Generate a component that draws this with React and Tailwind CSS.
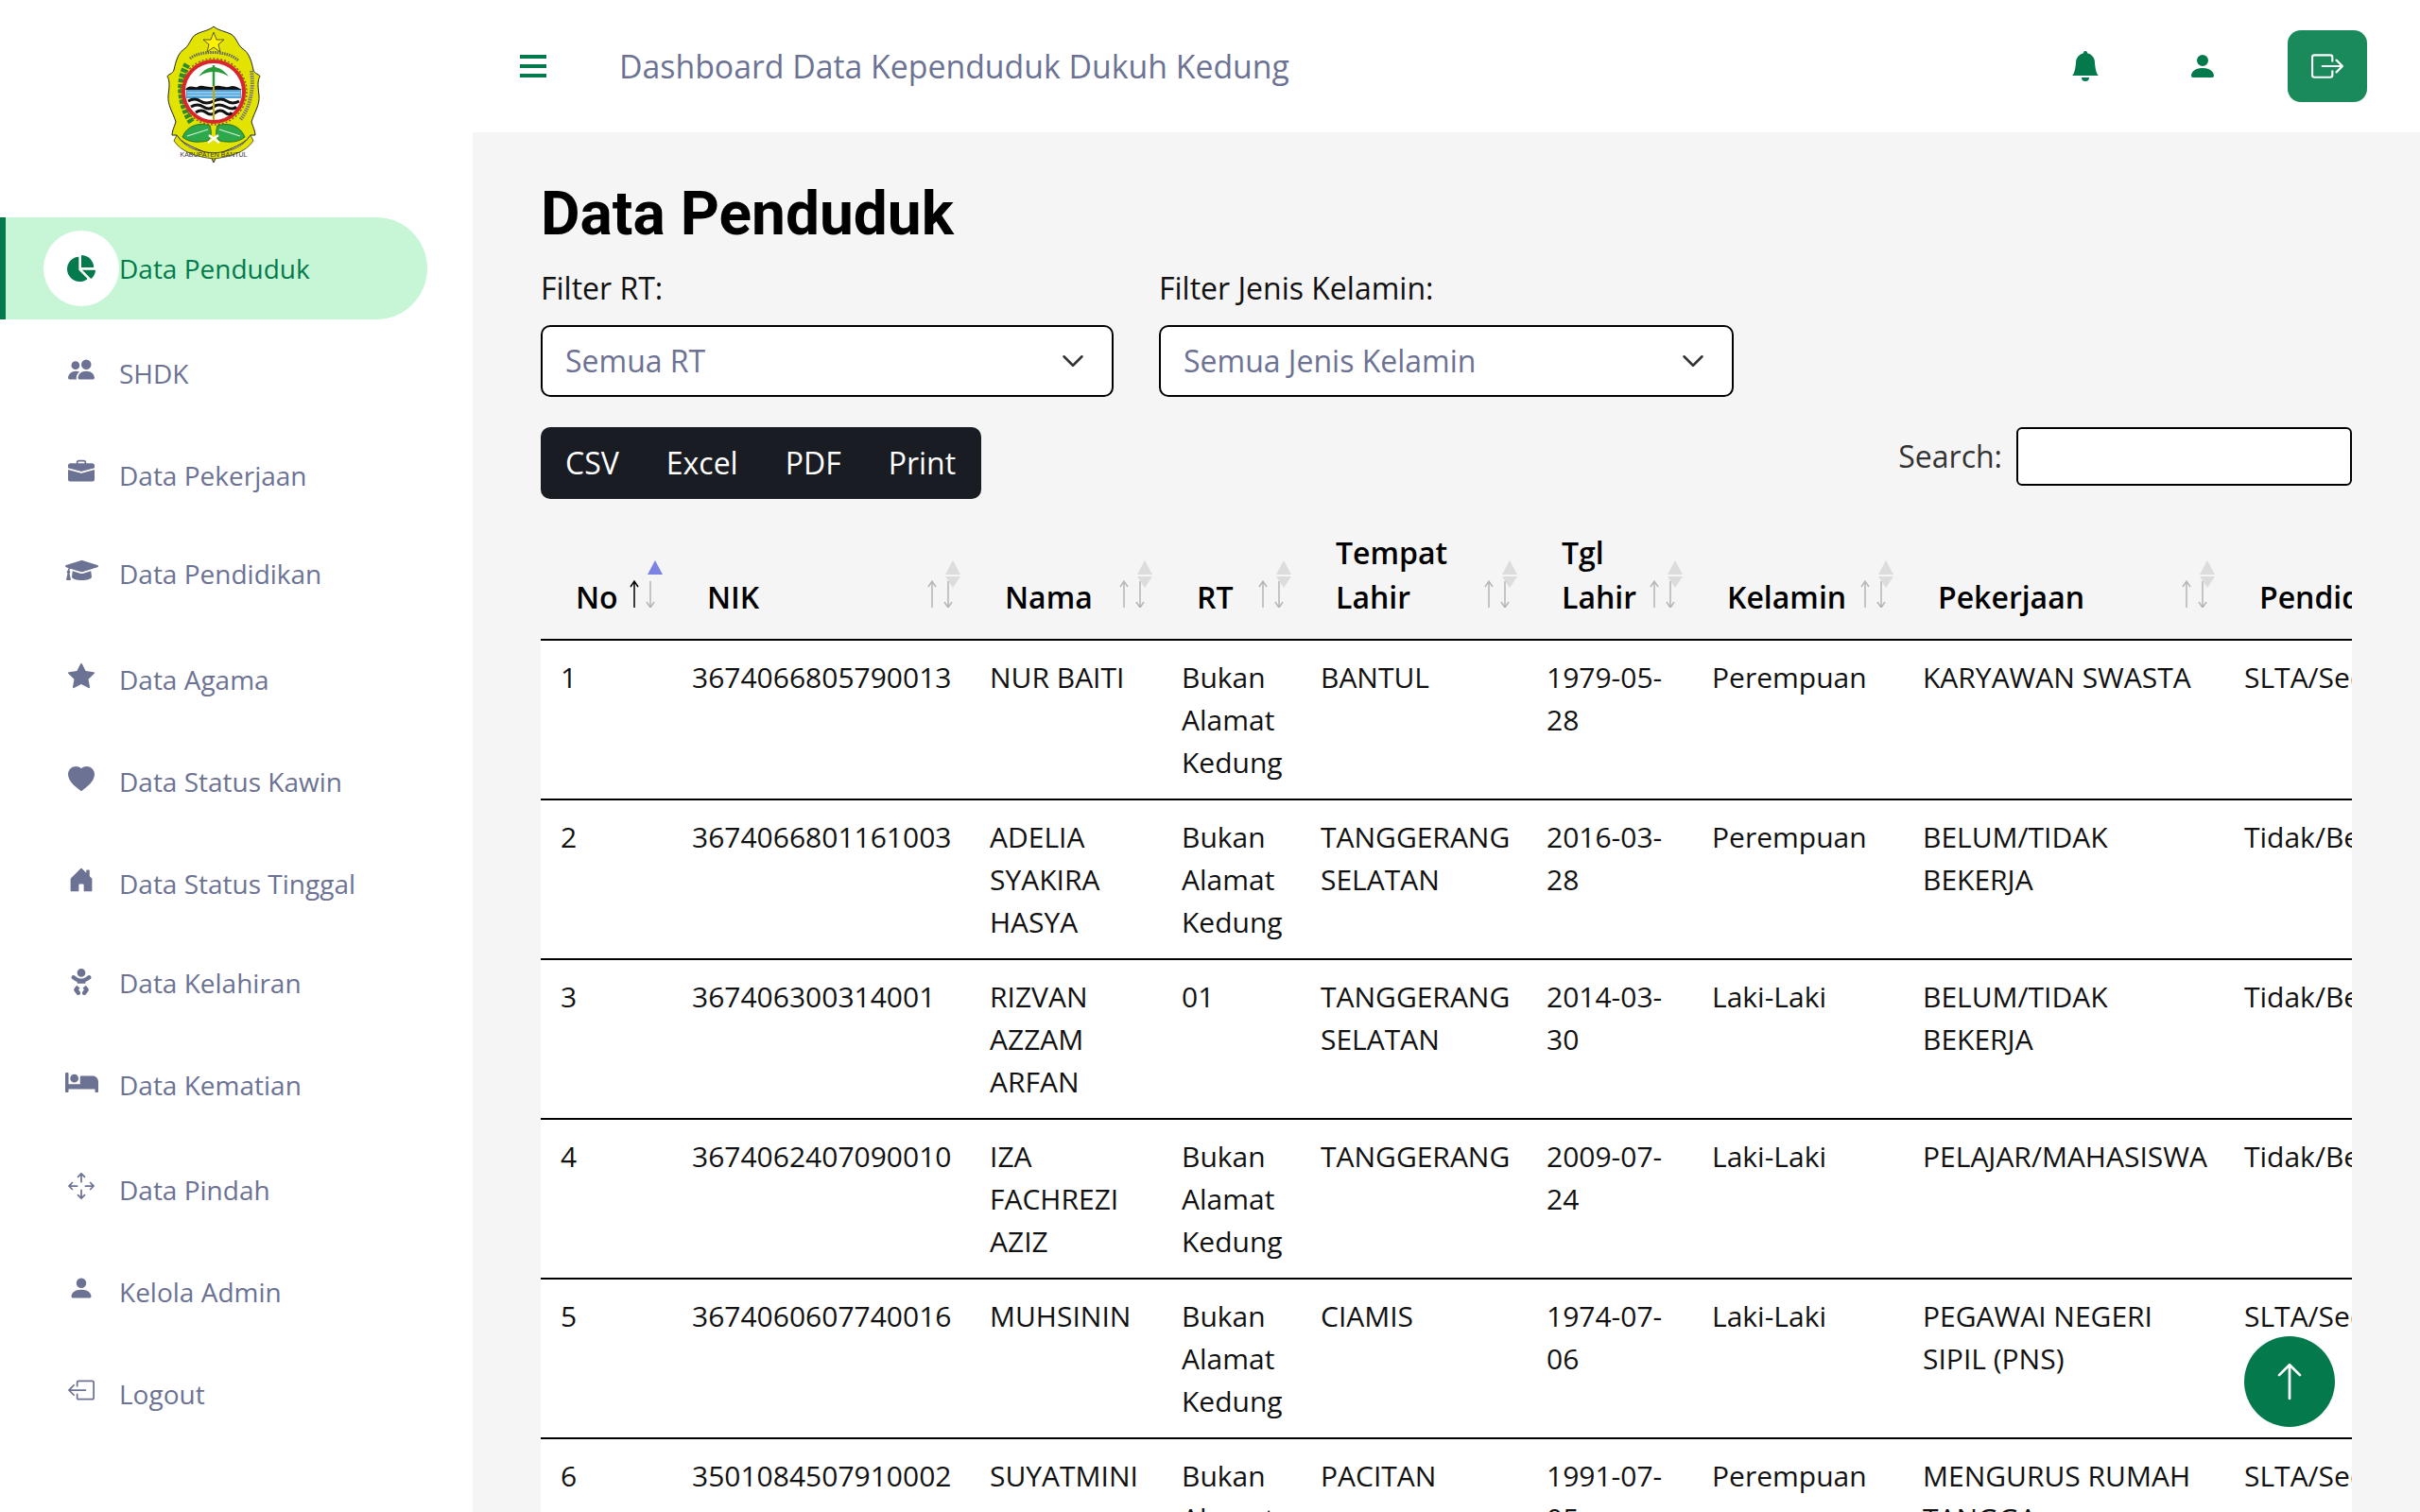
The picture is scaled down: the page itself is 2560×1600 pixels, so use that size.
import {
  BsPeopleFill,
  BsBriefcaseFill,
  BsStarFill,
  BsHeartFill,
  BsHouseDoorFill,
  BsArrowsMove,
  BsPersonFill,
  BsBoxArrowLeft,
  BsBoxArrowRight,
  BsBellFill,
  BsArrowUp,
} from "react-icons/bs";
import { FaChartPie, FaGraduationCap, FaBaby, FaBed } from "react-icons/fa";
import { ChevronDown } from "lucide-react";

const menu = [
  { label: "SHDK", icon: BsPeopleFill, cls: "mt-[27px]", iconCls: "mb-[8px] text-[28px]" },
  { label: "Data Pekerjaan", icon: BsBriefcaseFill, cls: "mt-[48px]", iconCls: "mb-[8px] text-[28px]" },
  { label: "Data Pendidikan", icon: FaGraduationCap, cls: "mt-[44px]", iconCls: "mb-[7px] text-[35px]" },
  { label: "Data Agama", icon: BsStarFill, cls: "mt-[52px]", iconCls: "mb-[8px] text-[28px]" },
  { label: "Data Status Kawin", icon: BsHeartFill, cls: "mt-[48px]", iconCls: "mb-[5px] text-[28px]" },
  { label: "Data Status Tinggal", icon: BsHouseDoorFill, cls: "mt-[48px]", iconCls: "mb-[8px] text-[28px]" },
  { label: "Data Kelahiran", icon: FaBaby, cls: "mt-[45px]", iconCls: "mb-[2px] text-[28px]" },
  { label: "Data Kematian", icon: FaBed, cls: "mt-[48px]", iconCls: "mb-[6px] text-[35px]" },
  { label: "Data Pindah", icon: BsArrowsMove, cls: "mt-[51px]", iconCls: "mb-[8px] text-[28px]" },
  { label: "Kelola Admin", icon: BsPersonFill, cls: "mt-[48px]", iconCls: "mb-[8px] text-[28px]" },
  { label: "Logout", icon: BsBoxArrowLeft, cls: "mt-[48px]", iconCls: "mb-[8px] text-[28px]" },
];

const columns = [
  { label: "No", width: "w-[139px]", active: true },
  { label: "NIK", width: "w-[315px]" },
  { label: "Nama", width: "w-[203px]" },
  { label: "RT", width: "w-[147px]" },
  { label: "Tempat Lahir", width: "w-[239px]" },
  { label: "Tgl Lahir", width: "w-[175px]" },
  { label: "Kelamin", width: "w-[223px]" },
  { label: "Pekerjaan", width: "w-[340px]" },
  { label: "Pendidikan", width: "w-[340px]" },
];

const rows = [
  ["1", "3674066805790013", "NUR BAITI", "Bukan Alamat Kedung", "BANTUL", "1979-05-28", "Perempuan", "KARYAWAN SWASTA", "SLTA/Sederajat"],
  ["2", "3674066801161003", "ADELIA SYAKIRA HASYA", "Bukan Alamat Kedung", "TANGGERANG SELATAN", "2016-03-28", "Perempuan", "BELUM/TIDAK BEKERJA", "Tidak/Belum Sekolah"],
  ["3", "367406300314001", "RIZVAN AZZAM ARFAN", "01", "TANGGERANG SELATAN", "2014-03-30", "Laki-Laki", "BELUM/TIDAK BEKERJA", "Tidak/Belum Sekolah"],
  ["4", "3674062407090010", "IZA FACHREZI AZIZ", "Bukan Alamat Kedung", "TANGGERANG", "2009-07-24", "Laki-Laki", "PELAJAR/MAHASISWA", "Tidak/Belum Sekolah"],
  ["5", "3674060607740016", "MUHSININ", "Bukan Alamat Kedung", "CIAMIS", "1974-07-06", "Laki-Laki", "PEGAWAI NEGERI SIPIL (PNS)", "SLTA/Sederajat"],
  ["6", "3501084507910002", "SUYATMINI", "Bukan Alamat Kedung", "PACITAN", "1991-07-05", "Perempuan", "MENGURUS RUMAH TANGGA", "SLTA/Sederajat"],
];

function Logo() {
  return (
    <svg width="100" height="146" viewBox="0 0 100 146">
      <path
        d="M50 1 C54 5 62 6 68 9 C74 12 75 20 80 24 C88 29 90 38 92 47 C93 51 99 52 99 54 C96 58 97 66 98 74 C99 84 93 92 90 102 C92 108 94 112 94 116 L89 116 C84 124 74 128 62 133 C56 135 54 136 50 145 C46 136 44 135 38 133 C26 128 16 124 11 116 L6 116 C6 112 8 108 10 102 C7 92 1 84 2 74 C3 66 4 58 1 54 C1 52 7 51 8 47 C10 38 12 29 20 24 C25 20 26 12 32 9 C38 6 46 5 50 1 Z"
        fill="#e2e400"
        stroke="#222"
        strokeWidth="1"
      />
      <path d="M50 7 L53 15 L61 15 L55 20 L57 28 L50 23 L43 28 L45 20 L39 15 L47 15 Z" fill="#fff200" stroke="#333" strokeWidth="0.8" />
      <path d="M25 35 C35 26 65 26 76 37" fill="none" stroke="#666" strokeWidth="3" strokeDasharray="1.5 1" />
      <path d="M90 48 C93 68 88 88 78 100" fill="none" stroke="#777" strokeWidth="4" strokeDasharray="1.5 1" />
      <path d="M22 41 C12 58 14 84 27 103" fill="none" stroke="#2f8a2f" strokeWidth="7" strokeDasharray="4 1.5" />
      <circle cx="50" cy="70" r="32" fill="#fff" stroke="#d9262c" strokeWidth="4" />
      <circle cx="50" cy="70" r="35" fill="none" stroke="#8a5a20" strokeWidth="1.5" strokeDasharray="2 2" />
      <path d="M20 68 C24 62 28 66 33 65 C38 62 42 66 50 65 C56 62 60 66 66 65 C72 62 76 66 80 68 Z" fill="#111" />
      <rect x="21" y="68" width="58" height="9" fill="#4ba3d9" />
      <path d="M22 71 H78 M22 74 H78" stroke="#cfe8f7" strokeWidth="1" />
      <path d="M23 80 Q30 76 36 80 T50 80 T64 80 T77 80 M26 86 Q33 82 39 86 T50 86 T63 86 T74 86 M31 92 Q37 88 42 92 T52 92 T62 92 T69 92" fill="none" stroke="#111" strokeWidth="3" />
      <path d="M50 42 V100" stroke="#c9a800" strokeWidth="2" />
      <path d="M50 42 V64" stroke="#2a9a3a" strokeWidth="2.5" />
      <path d="M34 54 C40 46 46 44 50 44 C54 44 60 46 66 54 C60 50 54 49 50 49 C46 49 40 50 34 54 Z" fill="#2a9a3a" />
      <path d="M17 118 C22 106 34 102 46 106 C48 112 48 118 44 122 C34 124 24 124 17 118 Z" fill="#2da84a" stroke="#145c2a" strokeWidth="0.8" />
      <path d="M83 118 C78 106 66 102 54 106 C52 112 52 118 56 122 C66 124 76 124 83 118 Z" fill="#2da84a" stroke="#145c2a" strokeWidth="0.8" />
      <path d="M22 117 L44 110 M78 117 L56 110" stroke="#d8f2d8" strokeWidth="1.2" />
      <path d="M44 124 L55 116 M56 124 L45 116" stroke="#fff" strokeWidth="2.5" />
      <path d="M11 116 C20 130 32 133 50 135 C68 133 80 130 89 116 L92 122 C84 134 68 139 50 141 C32 139 16 134 8 122 Z" fill="#e2e400" stroke="#333" strokeWidth="0.8" />
      <text x="50" y="139" textAnchor="middle" fontSize="7" fontFamily="Liberation Sans, sans-serif" fill="#333">KABUPATEN BANTUL</text>
    </svg>
  );
}

// arrows and triangles that DataTables draws at the right of each header cell
function SortIcon({ active }) {
  const up = active ? "#000" : "#b5b5b5";
  return (
    <svg width="36" height="50" viewBox="0 0 36 50" className="absolute right-[9px] bottom-[33px]">
      <path d="M27 0 L35 15 H19 Z" fill={active ? "#7d83e2" : "#dcdcdc"} />
      {!active && <path d="M19 17 H35 L27 29 Z" fill="#dcdcdc" />}
      <path d="M5 22 V50 M1 28 L5 22 L9 28" fill="none" stroke={up} strokeWidth="1.5" />
      <path d="M22 22 V50 M18 44 L22 50 L26 44" fill="none" stroke="#b5b5b5" strokeWidth="1.5" />
    </svg>
  );
}

export default function App() {
  return (
    <div className="relative flex h-screen overflow-hidden bg-white font-['Open_Sans',sans-serif]">
      {/* SIDEBAR */}
      <aside className="w-[500px] shrink-0 bg-white text-[28px] text-[#6c7293]">
        <div className="h-[230px] pt-[27px] pl-[176px]">
          <Logo />
        </div>
        <div className="flex h-[108px] w-[452px] items-center rounded-r-full border-l-[6px] border-[#047a4c] bg-[#c6f6d5] pl-[40px] text-[#047a4c]">
          <span className="flex h-[80px] w-[80px] shrink-0 items-center justify-center rounded-full bg-white text-[30px]">
            <FaChartPie />
          </span>
          <span>Data Penduduk</span>
        </div>
        {menu.map((item) => (
          <div key={item.label} className={`flex h-[60px] items-center ${item.cls}`}>
            <span className={`ml-[46px] flex w-[80px] shrink-0 justify-center ${item.iconCls}`}>
              <item.icon />
            </span>
            <span>{item.label}</span>
          </div>
        ))}
      </aside>

      <div className="flex min-w-0 flex-1 flex-col">
        {/* TOP BAR */}
        <header className="flex h-[140px] shrink-0 items-center bg-white pr-[56px] pl-[50px]">
          <svg width="28" height="24" viewBox="0 0 28 24" className="shrink-0">
            <path d="M0 2 H28 M0 12 H28 M0 22 H28" stroke="#047a4c" strokeWidth="4" />
          </svg>
          <p className="ml-[77px] text-[33.8px] text-[#6c7293]">Dashboard Data Kependuduk Dukuh Kedung</p>
          <div className="ml-auto flex items-center text-[#047a4c]">
            <BsBellFill className="text-[32px]" />
            <BsPersonFill className="ml-[92px] text-[32px]" />
            <button className="ml-[74px] flex h-[76px] w-[84px] items-center justify-center rounded-[14px] bg-[#1a8a5a] text-[34px] text-white">
              <BsBoxArrowRight />
            </button>
          </div>
        </header>

        {/* CONTENT */}
        <main className="min-h-0 flex-1 bg-[#f5f5f5] px-[72px] pt-[42px]">
          <h1 className="font-['Roboto',sans-serif] text-[64px] leading-[90px] font-bold text-black">Data Penduduk</h1>

          <div className="mt-[10px] flex gap-[48px]">
            <div className="w-[606px]">
              <label className="block text-[32px] leading-[45px] text-[#111]">Filter RT:</label>
              <div className="mt-[17px] flex h-[76px] items-center justify-between rounded-[10px] border-2 border-black bg-white pr-[22px] pl-[24px] text-[32px] text-[#6c7293]">
                <span>Semua RT</span>
                <ChevronDown size={38} color="#333" strokeWidth={1.6} />
              </div>
            </div>
            <div className="w-[608px]">
              <label className="block text-[32px] leading-[45px] text-[#111]">Filter Jenis Kelamin:</label>
              <div className="mt-[17px] flex h-[76px] items-center justify-between rounded-[10px] border-2 border-black bg-white pr-[22px] pl-[24px] text-[32px] text-[#6c7293]">
                <span>Semua Jenis Kelamin</span>
                <ChevronDown size={38} color="#333" strokeWidth={1.6} />
              </div>
            </div>
          </div>

          <div className="mt-[32px] flex items-start justify-between">
            <div className="flex h-[76px] items-center gap-[50px] rounded-[10px] bg-[#1a1c23] pr-[27px] pl-[26px] text-[32px] text-white">
              <span>CSV</span>
              <span>Excel</span>
              <span>PDF</span>
              <span>Print</span>
            </div>
            <div className="flex items-center">
              <label className="text-[32px] text-[#333]">Search:</label>
              <input className="ml-[15px] h-[62px] w-[355px] rounded-[6px] border-2 border-black bg-white" />
            </div>
          </div>

          <div className="mt-[19px] overflow-hidden">
            <table className="w-[2121px] table-fixed border-collapse text-[30px] leading-[45px] text-[#111]">
              <colgroup>
                {columns.map((c) => (
                  <col key={c.label} className={c.width} />
                ))}
              </colgroup>
              <thead>
                <tr>
                  {columns.map((c) => (
                    <th
                      key={c.label}
                      className="relative border-b-2 border-black pt-[14px] pr-[40px] pb-[21px] pl-[37px] text-left align-bottom text-[32px] leading-[47px] font-semibold text-black"
                    >
                      {c.label}
                      <SortIcon active={c.active} />
                    </th>
                  ))}
                </tr>
              </thead>
              <tbody className="bg-white">
                {rows.map((row) => (
                  <tr key={row[0]}>
                    {row.map((cell, i) => (
                      <td key={i} className="border-b-2 border-black pt-[16px] pr-[16px] pb-[16px] pl-[21px] align-top">
                        {cell}
                      </td>
                    ))}
                  </tr>
                ))}
              </tbody>
            </table>
          </div>
        </main>
      </div>

      {/* BACK TO TOP */}
      <button className="absolute top-[1414px] left-[2374px] flex h-[96px] w-[96px] items-center justify-center rounded-full bg-[#047a4c] text-[44px] text-white">
        <BsArrowUp />
      </button>
    </div>
  );
}
